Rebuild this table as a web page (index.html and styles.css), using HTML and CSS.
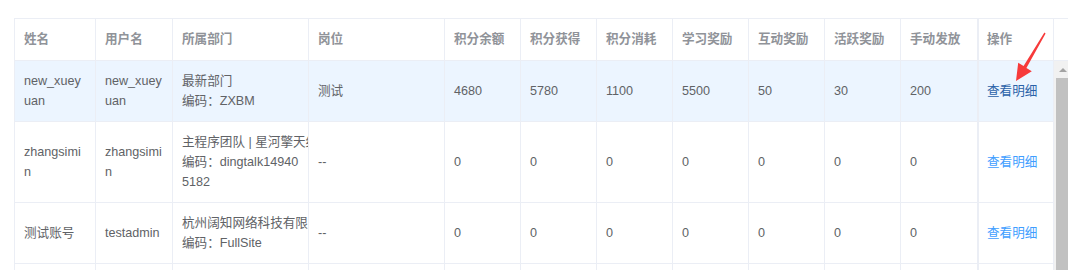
FILE: index.html
```html
<!DOCTYPE html>
<html lang="zh-CN">
<head>
<meta charset="utf-8">
<title>积分明细</title>
<link rel="stylesheet" href="styles.css">
</head>
<body>
<div class="page">
  <table class="grid">
    <thead>
      <tr>
        <th class="w-name"><div class="cell">姓名</div></th>
        <th class="w-user"><div class="cell">用户名</div></th>
        <th class="w-dept"><div class="cell">所属部门</div></th>
        <th class="w-post"><div class="cell">岗位</div></th>
        <th class="w-num"><div class="cell">积分余额</div></th>
        <th class="w-num"><div class="cell">积分获得</div></th>
        <th class="w-num"><div class="cell">积分消耗</div></th>
        <th class="w-num"><div class="cell">学习奖励</div></th>
        <th class="w-num"><div class="cell">互动奖励</div></th>
        <th class="w-num"><div class="cell">活跃奖励</div></th>
        <th class="w-num2"><div class="cell">手动发放</div></th>
        <th class="w-op op"><div class="cell">操作</div></th>
        <th class="gutter"></th>
      </tr>
    </thead>
    <tbody>
      <tr class="is-hover">
        <td><div class="cell">new_xueyuan</div></td>
        <td><div class="cell">new_xueyuan</div></td>
        <td><div class="cell"><div class="dept">最新部门</div><div>编码：ZXBM</div></div></td>
        <td><div class="cell">测试</div></td>
        <td><div class="cell">4680</div></td>
        <td><div class="cell">5780</div></td>
        <td><div class="cell">1100</div></td>
        <td><div class="cell">5500</div></td>
        <td><div class="cell">50</div></td>
        <td><div class="cell">30</div></td>
        <td><div class="cell">200</div></td>
        <td class="op"><div class="cell"><a class="link link-active">查看明细</a></div></td>
        <td class="scroll" rowspan="4"><span class="scroll-up"></span></td>
      </tr>
      <tr>
        <td><div class="cell">zhangsimin</div></td>
        <td><div class="cell">zhangsimin</div></td>
        <td><div class="cell"><div class="dept">主程序团队 | 星河擎天组</div><div>编码：dingtalk149405182</div></div></td>
        <td><div class="cell">--</div></td>
        <td><div class="cell">0</div></td>
        <td><div class="cell">0</div></td>
        <td><div class="cell">0</div></td>
        <td><div class="cell">0</div></td>
        <td><div class="cell">0</div></td>
        <td><div class="cell">0</div></td>
        <td><div class="cell">0</div></td>
        <td class="op"><div class="cell"><a class="link">查看明细</a></div></td>
      </tr>
      <tr>
        <td><div class="cell">测试账号</div></td>
        <td><div class="cell">testadmin</div></td>
        <td><div class="cell"><div class="dept">杭州阔知网络科技有限公司</div><div>编码：FullSite</div></div></td>
        <td><div class="cell">--</div></td>
        <td><div class="cell">0</div></td>
        <td><div class="cell">0</div></td>
        <td><div class="cell">0</div></td>
        <td><div class="cell">0</div></td>
        <td><div class="cell">0</div></td>
        <td><div class="cell">0</div></td>
        <td><div class="cell">0</div></td>
        <td class="op"><div class="cell"><a class="link">查看明细</a></div></td>
      </tr>
      <tr>
        <td><div class="cell">李明</div></td>
        <td><div class="cell">liming</div></td>
        <td><div class="cell">--</div></td>
        <td><div class="cell">--</div></td>
        <td><div class="cell">0</div></td>
        <td><div class="cell">0</div></td>
        <td><div class="cell">0</div></td>
        <td><div class="cell">0</div></td>
        <td><div class="cell">0</div></td>
        <td><div class="cell">0</div></td>
        <td><div class="cell">0</div></td>
        <td class="op"><div class="cell"><a class="link">查看明细</a></div></td>
      </tr>
    </tbody>
  </table>
  <svg class="arrow" viewBox="0 0 40 56" width="40" height="56" aria-hidden="true">
    <polygon points="32.4,2.4 33.6,3.6 14.4,37.9 19.8,41.3 4,51 6.2,32.7 11.6,36.1" fill="#f73a3a"/>
  </svg>
</div>
</body>
</html>
```

FILE: styles.css
```css
html, body {
  margin: 0;
  padding: 0;
  overflow: hidden;
  background: #ffffff;
}

body {
  font-family: "Liberation Sans", "Noto Sans CJK SC", sans-serif;
  font-size: 12.6px;
  color: #606266;
}

.page {
  position: relative;
  height: 270px;
  box-sizing: border-box;
  padding: 18px 0 0 14px;
}

.grid {
  border-collapse: separate;
  border-spacing: 0;
  table-layout: fixed;
  width: 1057px;
  border-left: 1px solid #ebeef5;
  border-top: 1px solid #ebeef5;
}

.grid th,
.grid td {
  box-sizing: border-box;
  border-right: 1px solid #ebeef5;
  border-bottom: 1px solid #ebeef5;
  padding: 10px 0;
  text-align: left;
  vertical-align: middle;
  line-height: 20px;
  background: #ffffff;
}

.grid th {
  color: #909399;
  font-weight: bold;
  padding: 10px 0 11px;
}

.w-name { width: 81px; }
.w-user { width: 77px; }
.w-dept { width: 136px; }
.w-post { width: 136px; }
.w-num { width: 76px; }
.w-num2 { width: 77px; }
.w-op { width: 76px; }

.grid th.gutter {
  width: 17px;
  border-right: none;
}

.grid .op {
  box-shadow: inset 1px 0 0 #ebeef5;
}

.cell {
  padding: 0 9px;
  overflow: hidden;
  word-break: break-all;
}

.dept {
  white-space: nowrap;
}

.grid tr.is-hover td {
  background: #ecf5ff;
}

.grid tr td.scroll,
.grid tr.is-hover td.scroll {
  padding: 0;
  border: none;
  vertical-align: top;
  background: linear-gradient(#c1c1c1, #c1c1c1) no-repeat 2px 17px / 13px 100%, #f1f1f1;
}

.scroll-up {
  display: block;
  width: 0;
  height: 0;
  margin: 7px auto 0;
  border-left: 4px solid transparent;
  border-right: 4px solid transparent;
  border-bottom: 4px solid #a3a3a3;
}

.link {
  color: #409eff;
  text-decoration: none;
  cursor: pointer;
}

.link-active {
  color: #2a62a8;
}

.arrow {
  position: absolute;
  left: 1012px;
  top: 30px;
}
```
